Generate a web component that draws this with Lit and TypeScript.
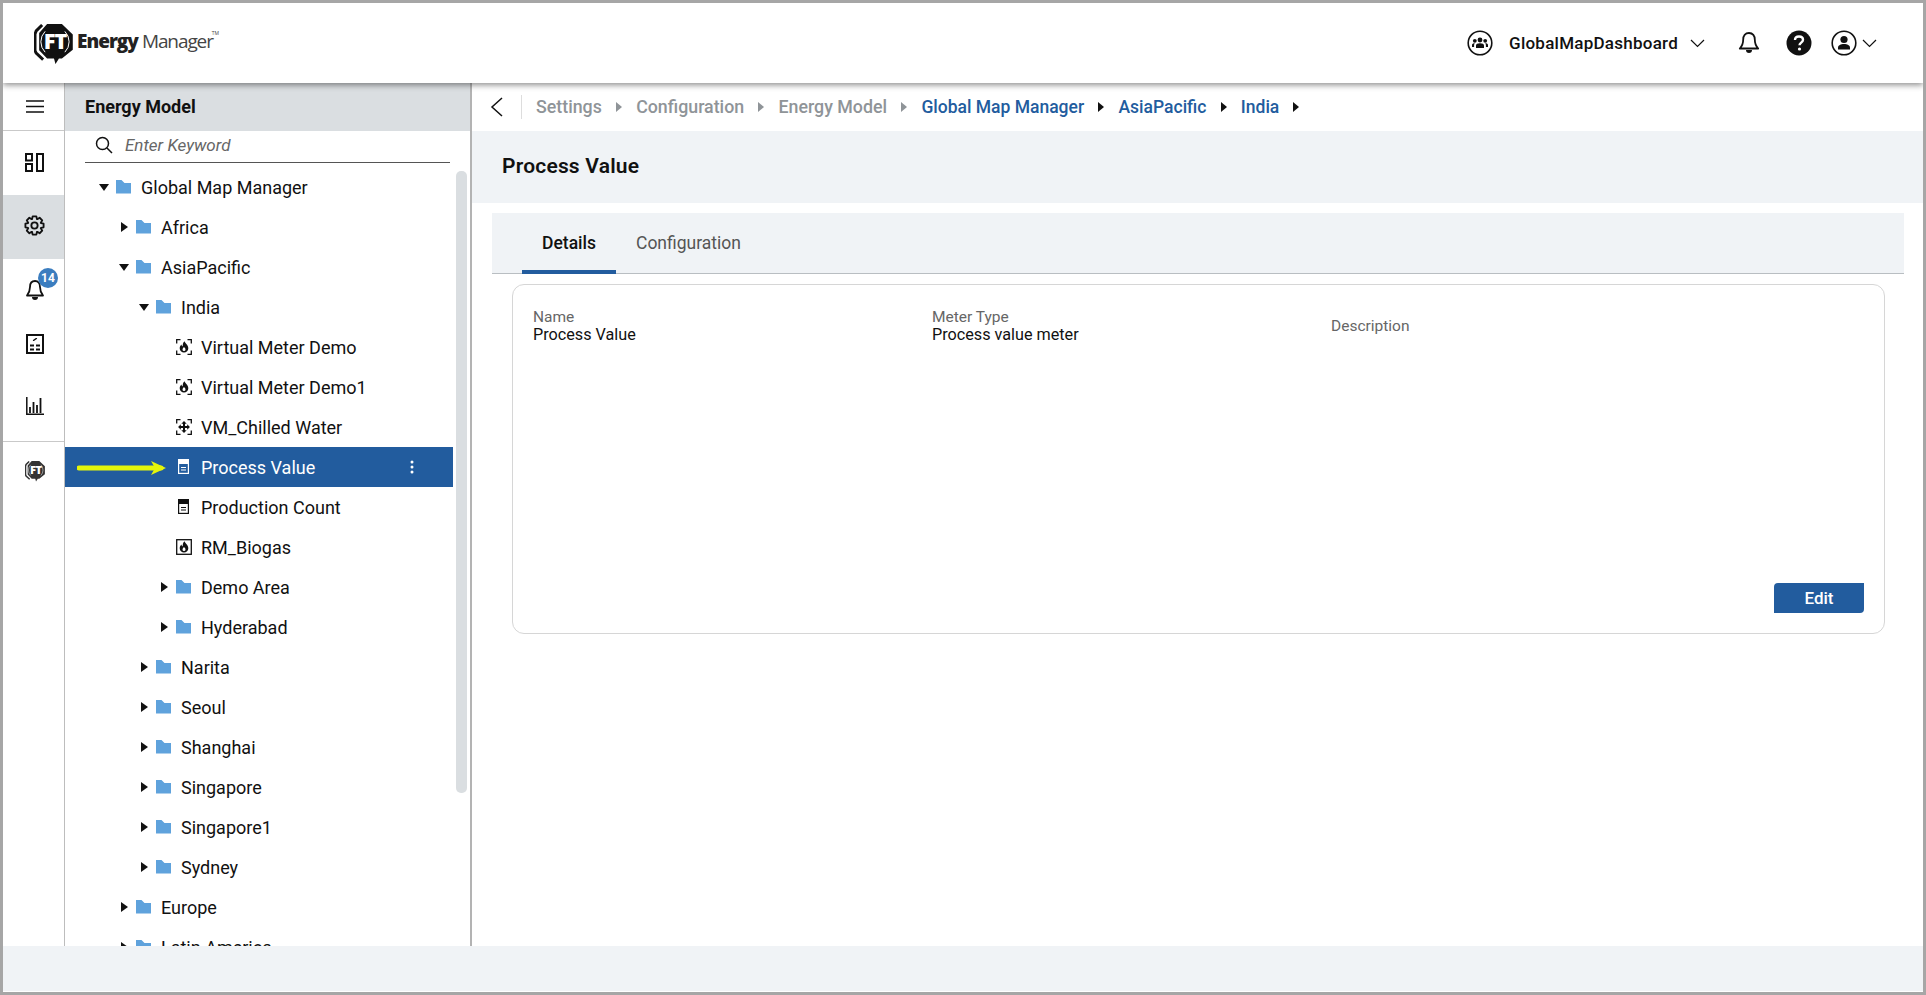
import { LitElement, html, css, svg } from 'lit';
import { customElement } from 'lit/decorators.js';

type Node = { label: string; level: number; kind: 'open' | 'closed' | 'flame' | 'chill' | 'meter' | 'biogas'; selected?: boolean };

const TREE: Node[] = [
  { label: 'Global Map Manager', level: 0, kind: 'open' },
  { label: 'Africa', level: 1, kind: 'closed' },
  { label: 'AsiaPacific', level: 1, kind: 'open' },
  { label: 'India', level: 2, kind: 'open' },
  { label: 'Virtual Meter Demo', level: 3, kind: 'flame' },
  { label: 'Virtual Meter Demo1', level: 3, kind: 'flame' },
  { label: 'VM_Chilled Water', level: 3, kind: 'chill' },
  { label: 'Process Value', level: 3, kind: 'meter', selected: true },
  { label: 'Production Count', level: 3, kind: 'meter' },
  { label: 'RM_Biogas', level: 3, kind: 'biogas' },
  { label: 'Demo Area', level: 3, kind: 'closed' },
  { label: 'Hyderabad', level: 3, kind: 'closed' },
  { label: 'Narita', level: 2, kind: 'closed' },
  { label: 'Seoul', level: 2, kind: 'closed' },
  { label: 'Shanghai', level: 2, kind: 'closed' },
  { label: 'Singapore', level: 2, kind: 'closed' },
  { label: 'Singapore1', level: 2, kind: 'closed' },
  { label: 'Sydney', level: 2, kind: 'closed' },
  { label: 'Europe', level: 1, kind: 'closed' },
  { label: 'Latin America', level: 1, kind: 'closed' },
];

const CRUMBS = [
  { label: 'Settings', active: false },
  { label: 'Configuration', active: false },
  { label: 'Energy Model', active: false },
  { label: 'Global Map Manager', active: true },
  { label: 'AsiaPacific', active: true },
  { label: 'India', active: true },
];

const flame = svg`<path d="M8.600 2.300c.4 2 3.700 3.500 3.700 7a4.300 4.300 0 0 1-8.600 0c0-1.700.8-2.900 1.900-3.700 0 1 .3 1.600 1 1.800.4-1.700-.2-3.300 2-5.100z" fill="currentColor"/><path d="M8 7.800c.3 1 1.500 1.400 1.500 2.600a1.500 1.500 0 0 1-3 0c0-1.100 1.100-1.500 1.500-2.600z" fill="#fff"/>`;
const corners = svg`<path d="M.7 4.500V.7h3.800M11.500.7h3.800v3.800M15.300 11.500v3.800h-3.800M4.500 15.300H.7v-3.800" fill="none" stroke="currentColor" stroke-width="1.300"/>`;

// 8-tooth cog outline, centred on 12,12
function gearPath() {
  const pts: string[] = [];
  for (let i = 0; i < 8; i++) {
    const a = (i * Math.PI) / 4;
    for (const [r, d] of [[7.9, -0.36], [10.6, -0.2], [10.6, 0.2], [7.9, 0.36]]) {
      pts.push(`${(12 + r * Math.sin(a + d)).toFixed(2)} ${(12 - r * Math.cos(a + d)).toFixed(2)}`);
    }
  }
  return `M${pts.join('L')}Z`;
}

function chevron() {
  return html`<svg width="15" height="9" viewBox="0 0 15 9"><path d="M1 1l6.500 6.500L14 1" fill="none" stroke="#111" stroke-width="1.200"/></svg>`;
}

function ftMark(size: number, tone: string) {
  return html`<svg width=${size} height=${size * 1.04} viewBox="0 0 39 41">
    <path d="M8 1 2 7 .8 10v17L2 29.500 9 36" fill="none" stroke=${tone} stroke-width="3"/>
    <path d="M13 0h15l11 10.500V26L28 35h-3l-3.500 5.500L20 35h-7L5 26.500V9z" fill=${tone}/>
    <path d="M11 7.500a15 15 0 0 0 0 21M31 7.500a15 15 0 0 1 0 21" fill="none" stroke="#fff" stroke-width="1"/>
    <text x="21" y="25.500" text-anchor="middle" class="ft-text">FT</text>
  </svg>`;
}

function nodeIcon(kind: Node['kind'], selected = false) {
  if (kind === 'open' || kind === 'closed') {
    return html`<svg class="ico folder" width="15" height="14" viewBox="0 0 15 14"><path d="M0 0h5.500l3 3H15v10.500H0z" fill="#5fa2dc"/></svg>`;
  }
  if (kind === 'flame') {
    return html`<svg class="ico" width="16" height="16" viewBox="0 0 16 16">${corners}${flame}</svg>`;
  }
  if (kind === 'chill') {
    return html`<svg class="ico" width="16" height="16" viewBox="0 0 16 16">${corners}<path d="M8 3.500v9M3.500 8h9" fill="none" stroke="currentColor" stroke-width="2"/><path d="M5.300 4.800 8 2.100l2.700 2.700zM5.300 11.200 8 13.900l2.700-2.700zM4.800 5.300 2.100 8l2.700 2.700zM11.200 5.300 13.900 8l-2.700 2.700z" fill="currentColor"/></svg>`;
  }
  if (kind === 'biogas') {
    return html`<svg class="ico" width="16" height="16" viewBox="0 0 16 16"><rect x=".7" y=".7" width="14.600" height="14.600" fill="none" stroke="currentColor" stroke-width="1.300"/>${flame}</svg>`;
  }
  const fg = selected ? '#fff' : '#111';
  const inner = selected ? '#225c9e' : '#fff';
  const lines = selected ? '#fff' : '#111';
  return html`<svg class="ico" width="16" height="16" viewBox="0 0 16 16">
    <rect x="2" y="0" width="11" height="15" fill=${fg}/>
    <rect x="3.200" y="5" width="8.600" height="8.800" fill=${inner}/>
    <path d="M5 8.500h5M5 11h5" stroke=${lines} stroke-width="1.200"/>
  </svg>`;
}

@customElement('app-root')
export class AppRoot extends LitElement {
  static styles = css`
    :host {
      display: block;
      height: 100vh;
      font-family: Roboto, 'Liberation Sans', sans-serif;
      color: #111;
    }
    .frame {
      box-sizing: border-box;
      height: 100%;
      border: 3px solid #a6a6a6;
      display: flex;
      flex-direction: column;
      background: #fff;
      overflow: hidden;
    }
    .ft-text {
      font: 800 22px 'Open Sans', sans-serif;
      letter-spacing: -1px;
      fill: #fff;
    }

    /* top bar */
    .topbar {
      flex: 0 0 80px;
      display: flex;
      align-items: center;
      justify-content: space-between;
      padding: 0 46px 0 31px;
      background: #fff;
      box-shadow: 0 2px 6px rgba(0, 0, 0, 0.45);
      position: relative;
      z-index: 2;
    }
    .logo {
      display: flex;
      align-items: center;
      gap: 4px;
      margin-top: 2px;
    }
    .logo-text {
      display: flex;
      align-items: flex-start;
      font-family: 'Open Sans', sans-serif;
      font-size: 19px;
      letter-spacing: -0.8px;
      margin-top: -6px;
      color: #222;
    }
    .logo-text b { font-weight: 800; margin-right: 4px; letter-spacing: -1px; }
    .logo-text span { font-weight: 400; color: #444; letter-spacing: -1.1px; }
    .logo-text sup { font-size: 5px; line-height: 10px; letter-spacing: 0; color: #444; margin-left: -1px; }
    .actions {
      display: flex;
      align-items: center;
    }
    .app-name {
      font-size: 17px;
      font-weight: 500;
      margin: 0 12px 0 16px;
      letter-spacing: 0.25px;
    }
    .bell-top { margin-left: 33px; }
    .help { margin-left: 26px; }
    .user { margin-left: 19px; margin-right: 5px; }

    /* body */
    .body {
      flex: 1;
      min-height: 0;
      display: flex;
    }
    .rail {
      flex: 0 0 62px;
      box-sizing: border-box;
      border-right: 1px solid #bdbdbd;
      display: flex;
      flex-direction: column;
      background: #fff;
    }
    .rail-menu {
      flex: 0 0 48px;
      border-bottom: 1px solid #c9c9c9;
      box-sizing: border-box;
      display: flex;
      align-items: center;
      justify-content: center;
      padding-left: 2px;
    }
    .rail-items {
      display: grid;
      grid-template-rows: 64px 64px 60px 52px 68px;
      border-bottom: 1px solid #c9c9c9;
      padding-bottom: 2px;
    }
    .rail-item {
      display: flex;
      align-items: center;
      justify-content: center;
      position: relative;
      padding-left: 2px;
    }
    .rail-item.active { background: #dadee1; }
    .up-1 { margin-bottom: 2px; }
    .up-2 { margin-bottom: 4px; }
    .down-1 { margin-top: 2px; }
    .bell-rail { margin-top: 2px; }
    .badge {
      position: absolute;
      left: 35px;
      top: 9px;
      width: 20px;
      height: 20px;
      border-radius: 50%;
      background: #3b7dbf;
      color: #fff;
      font-size: 12px;
      font-weight: 700;
      display: flex;
      align-items: center;
      justify-content: center;
    }
    .rail-logo {
      display: flex;
      justify-content: center;
      padding: 19px 0 0 2px;
    }

    /* tree panel */
    .panel {
      flex: 0 0 405px;
      display: flex;
      flex-direction: column;
      border-right: 2px solid #b3b3b3;
      min-height: 0;
    }
    .panel-head {
      flex: 0 0 48px;
      box-sizing: border-box;
      background: #dadee1;
      display: flex;
      align-items: center;
      padding: 0 0 1px 20px;
      font-size: 18px;
      font-weight: 700;
    }
    .search {
      flex: 0 0 32px;
      box-sizing: border-box;
      margin: 0 20px;
      border-bottom: 1px solid #555;
      display: flex;
      align-items: center;
      gap: 12px;
      padding: 0 0 3px 10px;
      font-size: 17px;
      font-style: italic;
      color: #666;
    }
    .tree-wrap {
      flex: 1;
      min-height: 0;
      display: flex;
      overflow: hidden;
      padding-top: 4px;
    }
    .tree { flex: 0 0 388px; }
    .row {
      height: 40px;
      display: flex;
      align-items: center;
      font-size: 18px;
      color: #111;
      position: relative;
    }
    .row.selected {
      background: #225c9e;
      color: #fff;
    }
    .caret {
      flex: 0 0 20px;
      margin-right: 2px;
      display: flex;
      justify-content: center;
    }
    .ico {
      flex: none;
      margin-right: 9px;
    }
    .ico.folder { margin-right: 10px; }
    .kebab {
      margin-left: auto;
      margin-right: 39px;
    }
    .pointer {
      position: absolute;
      left: 12px;
      top: 13px;
    }
    .scrollbar {
      flex: 0 0 11px;
      margin: 4px 0 0 3px;
      height: 622px;
      background: #dadee1;
      border-radius: 5px;
    }

    /* main */
    .main {
      flex: 1;
      min-width: 0;
      display: flex;
      flex-direction: column;
    }
    .crumbs {
      flex: 0 0 48px;
      box-sizing: border-box;
      display: flex;
      align-items: center;
      padding-bottom: 1px;
      font-size: 17.8px;
      font-weight: 500;
      color: #8f9498;
    }
    .back {
      margin-left: 18px;
      padding-right: 18px;
      border-right: 1px solid #ddd;
      height: 24px;
      display: flex;
      align-items: center;
      margin-right: 14px;
    }
    .crumb.active { color: #225c9e; font-size: 17.5px; }
    .sep { margin: 0 14.2px; display: flex; }
    .title-band {
      flex: 0 0 72px;
      box-sizing: border-box;
      background: #f0f3f6;
      display: flex;
      align-items: center;
      padding: 0 0 3px 30px;
      font-size: 21px;
      font-weight: 600;
      letter-spacing: 0.2px;
    }
    .tabs {
      margin: 10px 19px 0 20px;
      height: 60px;
      background: #f0f3f6;
      border-bottom: 1px solid #b9bec2;
      display: flex;
      padding-left: 30px;
      font-size: 17.5px;
      color: #555;
    }
    .tab {
      padding: 3px 20px 0;
      display: flex;
      align-items: center;
      box-sizing: border-box;
      border-bottom: 4px solid transparent;
      margin-bottom: -1px;
    }
    .tab.active {
      color: #111;
      font-weight: 500;
      border-bottom-color: #225c9e;
    }
    .card {
      margin: 10px 38px 0 40px;
      height: 350px;
      box-sizing: border-box;
      border: 1px solid #d6d6d6;
      border-radius: 12px;
      padding: 24px 20px 20px 20px;
      display: flex;
      flex-direction: column;
      justify-content: space-between;
    }
    .fields {
      display: grid;
      grid-template-columns: 399px 399px 1fr;
      align-items: center;
      line-height: 17px;
    }
    .field-label { color: #666; font-size: 15.5px; }
    .field-value { color: #111; font-size: 16.2px; }
    .card-foot {
      display: flex;
      justify-content: flex-end;
    }
    .edit {
      width: 90px;
      height: 30px;
      border: none;
      border-radius: 4px 0 4px 0;
      background: #225c9e;
      color: #fff;
      font: 500 17px Roboto, sans-serif;
    }

    .footer {
      flex: 0 0 45px;
      background: #f0f3f6;
      border-bottom: 1px solid #fff;
      position: relative;
      z-index: 1;
    }
  `;

  renderCaret(kind: Node['kind']) {
    if (kind === 'open') {
      return html`<svg width="10" height="7" viewBox="0 0 10 7"><path d="M0 0h10L5 7z" fill="#111"/></svg>`;
    }
    if (kind === 'closed') {
      return html`<svg width="7" height="10" viewBox="0 0 7 10"><path d="M0 0l7 5-7 5z" fill="#111"/></svg>`;
    }
    return '';
  }

  renderRow(n: Node) {
    return html`
      <div class="row ${n.selected ? 'selected' : ''}" style="padding-left:${29 + n.level * 20}px">
        ${n.selected
          ? html`<svg class="pointer" width="90" height="16" viewBox="0 0 90 16">
              <path d="M2 8h82" stroke="#e4f50a" stroke-width="5" stroke-linecap="round"/>
              <path d="M74 1l15 7-15 7 4-7z" fill="#e4f50a"/>
            </svg>`
          : ''}
        <span class="caret">${this.renderCaret(n.kind)}</span>
        ${nodeIcon(n.kind, n.selected)}
        <span class="name">${n.label}</span>
        ${n.selected
          ? html`<svg class="kebab" width="4" height="14" viewBox="0 0 4 14"><circle cx="2" cy="2" r="1.500" fill="#fff"/><circle cx="2" cy="7" r="1.500" fill="#fff"/><circle cx="2" cy="12" r="1.500" fill="#fff"/></svg>`
          : ''}
      </div>
    `;
  }

  render() {
    return html`
      <div class="frame">
        <header class="topbar">
          <div class="logo">
            ${ftMark(39, '#111')}
            <div class="logo-text"><b>Energy</b><span>Manager</span><sup>TM</sup></div>
          </div>
          <div class="actions">
            <svg width="26" height="26" viewBox="0 0 26 26">
              <circle cx="13" cy="13" r="11.800" fill="none" stroke="#111" stroke-width="1.600"/>
              <circle cx="13" cy="10" r="2.400" fill="#111"/><circle cx="7.800" cy="10.800" r="1.900" fill="#111"/><circle cx="18.200" cy="10.800" r="1.900" fill="#111"/>
              <path d="M9 18v-2.500c0-1.500 1.500-2.300 4-2.300s4 .8 4 2.300V18zM5 17v-2c0-1.200 1-1.800 2.800-1.800-.5.600-.7 1.300-.7 2V17zM21 17v-2c0-1.200-1-1.800-2.800-1.800.5.600.7 1.300.7 2V17z" fill="#111"/>
            </svg>
            <span class="app-name">GlobalMapDashboard</span>
            ${chevron()}
            <svg class="bell-top" width="22" height="24" viewBox="0 0 22 24">
              <path d="M11 2c-3.800 0-5.800 3-5.800 6.500 0 4.500-1 6.500-3.400 9h18.400c-2.400-2.500-3.400-4.500-3.400-9C16.800 5 14.800 2 11 2z" fill="none" stroke="#111" stroke-width="1.800" stroke-linejoin="round"/>
              <path d="M8 19h6a3 3 0 0 1-6 0z" fill="#111"/>
            </svg>
            <svg class="help" width="26" height="26" viewBox="0 0 26 26">
              <circle cx="13" cy="13" r="12.500" fill="#111"/>
              <path d="M9 10c0-2.300 1.700-3.500 4-3.500s4 1.300 4 3.300c0 2.800-3.500 2.800-3.500 5.400" fill="none" stroke="#fff" stroke-width="2.400"/>
              <circle cx="13.500" cy="19" r="1.600" fill="#fff"/>
            </svg>
            <svg class="user" width="26" height="26" viewBox="0 0 26 26">
              <circle cx="13" cy="13" r="11.800" fill="none" stroke="#111" stroke-width="1.600"/>
              <circle cx="13" cy="9.500" r="3.600" fill="#111"/>
              <path d="M7 19.500v-1.800c0-2.400 2.800-3.700 6-3.700s6 1.300 6 3.700v1.800z" fill="#111"/>
            </svg>
            ${chevron()}
          </div>
        </header>

        <div class="body">
          <nav class="rail">
            <div class="rail-menu">
              <svg width="18" height="13" viewBox="0 0 18 13"><path d="M0 1h18M0 6.500h18M0 12h18" stroke="#111" stroke-width="1.500"/></svg>
            </div>
            <div class="rail-items">
              <div class="rail-item">
                <svg class="up-1" width="19" height="19" viewBox="0 0 19 19" fill="none" stroke="#111" stroke-width="2"><rect x="1" y="1" width="6" height="6.500"/><rect x="1" y="11" width="6" height="7"/><rect x="12" y="1" width="6" height="17"/></svg>
              </div>
              <div class="rail-item active">
                <svg class="up-2" width="21" height="21" viewBox="0 0 24 24" fill="none" stroke="#111" stroke-width="2.100" stroke-linejoin="round">
                  <circle cx="12" cy="12" r="3.600"/>
                  <path d=${gearPath()}/>
                </svg>
              </div>
              <div class="rail-item">
                <svg class="bell-rail" width="20" height="22" viewBox="0 0 20 22">
                  <path d="M10 2C6.500 2 5 4.800 5 8c0 4-1 6-3 8.500h16C16 14 15 12 15 8c0-3.200-1.500-6-5-6z" fill="none" stroke="#111" stroke-width="1.800" stroke-linejoin="round"/>
                  <path d="M7 18h6a3 3 0 0 1-6 0z" fill="#111"/>
                </svg>
                <span class="badge">14</span>
              </div>
              <div class="rail-item">
                <svg class="up-1" width="18" height="20" viewBox="0 0 18 20" fill="none" stroke="#111"><rect x="1" y="1" width="16" height="18" stroke-width="2"/><path d="M4 11.500h4M10 11.500h4M4 15.500h4M10 15.500h4" stroke-width="2"/><path d="M7.500 7c0-1.600 3-1.600 3-3" stroke-width="1.400"/></svg>
              </div>
              <div class="rail-item">
                <svg class="down-1" width="18" height="18" viewBox="0 0 18 18" stroke="#111" fill="none"><path d="M.8 0v17.200H18" stroke-width="1.500"/><path d="M4 16v-6M7.500 16V5M11 16V8M14.500 16V1" stroke-width="1.800"/></svg>
              </div>
            </div>
            <div class="rail-logo">${ftMark(20, '#333')}</div>
          </nav>

          <aside class="panel">
            <div class="panel-head">Energy Model</div>
            <div class="search">
              <svg width="18" height="18" viewBox="0 0 18 18" fill="none" stroke="#111" stroke-width="1.500"><circle cx="7.500" cy="7.500" r="6"/><path d="M12 12l5 5"/></svg>
              <span>Enter Keyword</span>
            </div>
            <div class="tree-wrap">
              <div class="tree">${TREE.map((n) => this.renderRow(n))}</div>
              <div class="scrollbar"></div>
            </div>
          </aside>

          <main class="main">
            <div class="crumbs">
              <span class="back"><svg width="13" height="20" viewBox="0 0 13 20"><path d="M12 1L2 10l10 9" fill="none" stroke="#111" stroke-width="1.500"/></svg></span>
              ${CRUMBS.map(
                (c) => html`
                  <span class="crumb ${c.active ? 'active' : ''}">${c.label}</span>
                  <span class="sep"><svg width="6" height="10" viewBox="0 0 6 10"><path d="M0 0l6 5-6 5z" fill=${c.active ? '#111' : '#8f9498'}/></svg></span>
                `,
              )}
            </div>
            <div class="title-band">Process Value</div>
            <div class="tabs">
              <div class="tab active">Details</div>
              <div class="tab">Configuration</div>
            </div>
            <section class="card">
              <div class="fields">
                <div><div class="field-label">Name</div><div class="field-value">Process Value</div></div>
                <div><div class="field-label">Meter Type</div><div class="field-value">Process value meter</div></div>
                <div class="field-label">Description</div>
              </div>
              <div class="card-foot"><button class="edit">Edit</button></div>
            </section>
          </main>
        </div>
        <footer class="footer"></footer>
      </div>
    `;
  }
}
